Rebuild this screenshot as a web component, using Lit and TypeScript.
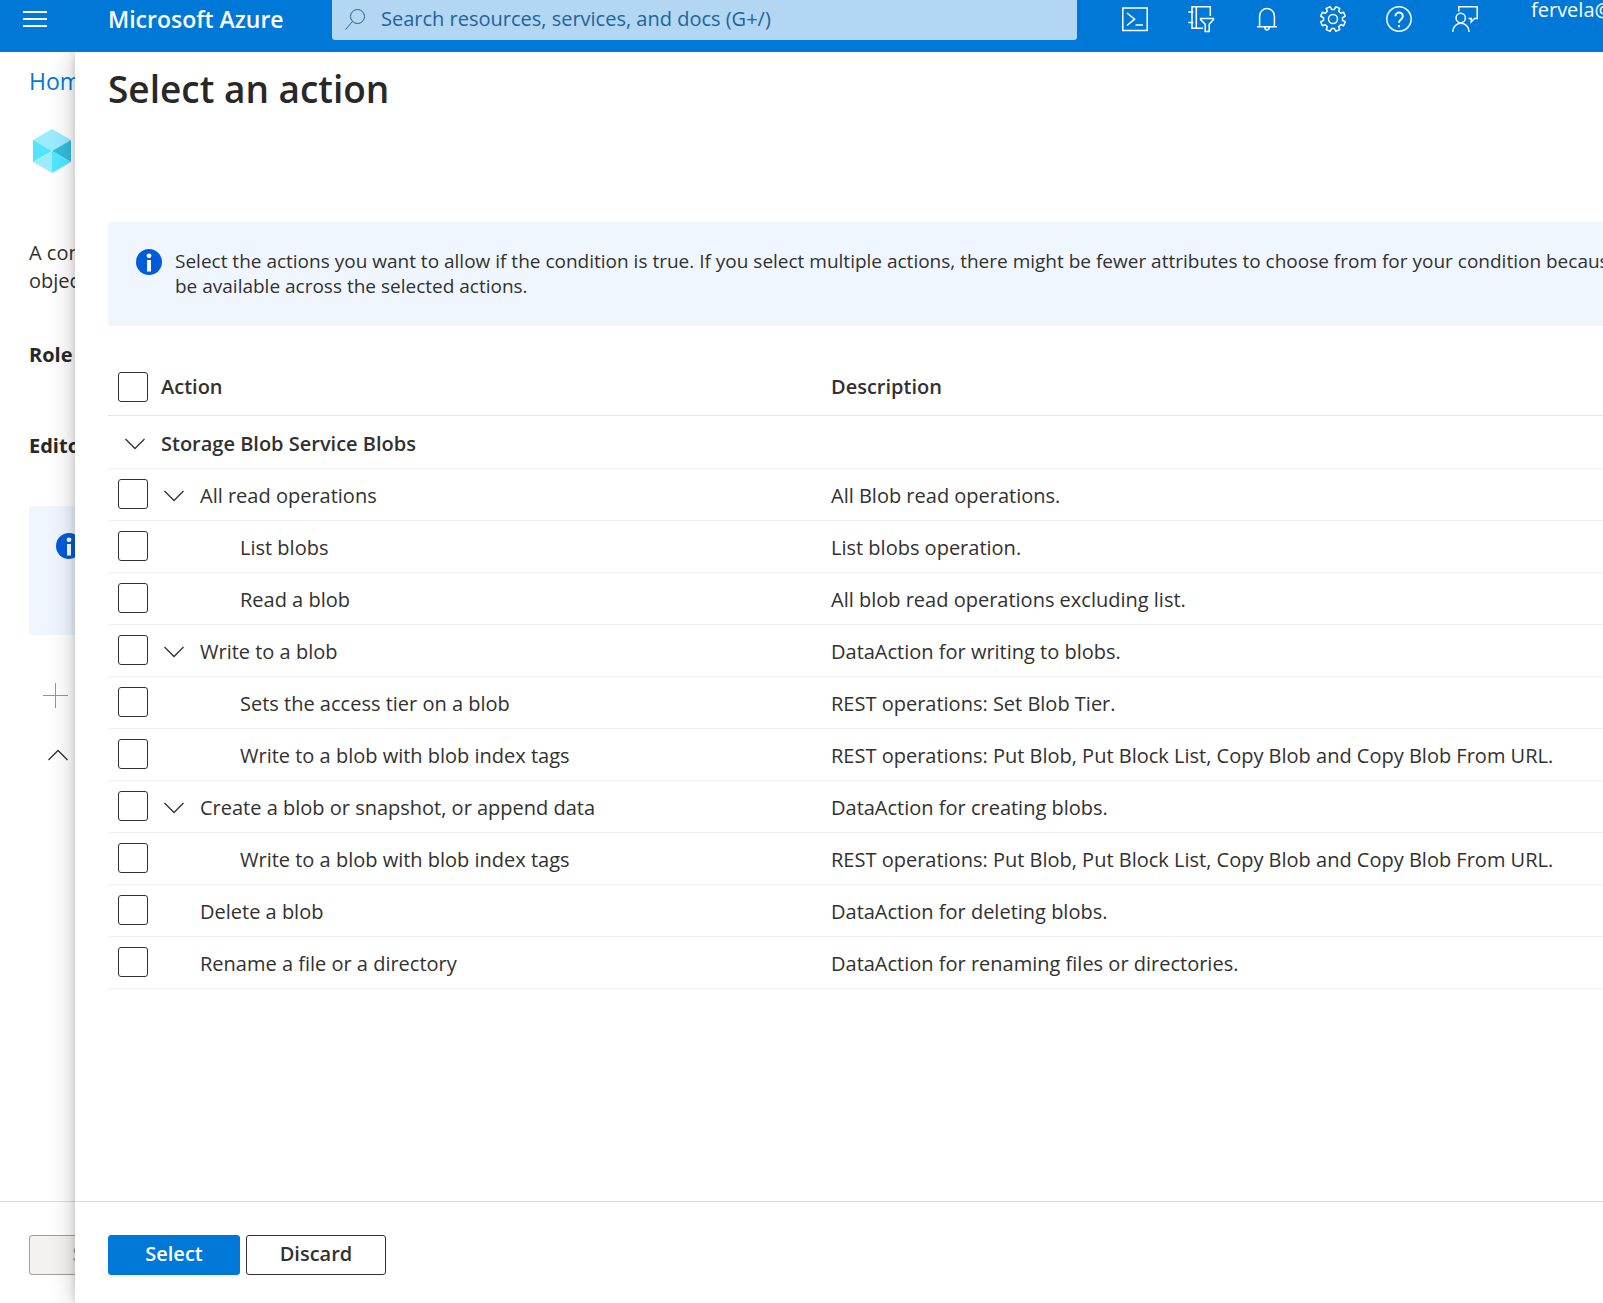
import { LitElement, html, css, svg, nothing } from "lit";
import { customElement } from "lit/decorators.js";

interface ActionRow {
  level: number;
  name: string;
  description: string;
  group?: boolean;
}

const ROWS: ActionRow[] = [
  { level: 1, name: "All read operations", description: "All Blob read operations.", group: true },
  { level: 2, name: "List blobs", description: "List blobs operation." },
  { level: 2, name: "Read a blob", description: "All blob read operations excluding list." },
  { level: 1, name: "Write to a blob", description: "DataAction for writing to blobs.", group: true },
  { level: 2, name: "Sets the access tier on a blob", description: "REST operations: Set Blob Tier." },
  { level: 2, name: "Write to a blob with blob index tags", description: "REST operations: Put Blob, Put Block List, Copy Blob and Copy Blob From URL." },
  { level: 1, name: "Create a blob or snapshot, or append data", description: "DataAction for creating blobs.", group: true },
  { level: 2, name: "Write to a blob with blob index tags", description: "REST operations: Put Blob, Put Block List, Copy Blob and Copy Blob From URL." },
  { level: 1, name: "Delete a blob", description: "DataAction for deleting blobs." },
  { level: 1, name: "Rename a file or a directory", description: "DataAction for renaming files or directories." },
];

// Outline of an eight-toothed gear centred in a 26-unit box.
const gearPath = () => {
  const pts: string[] = [];
  for (let i = 0; i < 8; i++) {
    const base = (i * 45 + 22.5) * (Math.PI / 180);
    for (const [da, r] of [[-14, 9.6], [-10, 12.6], [10, 12.6], [14, 9.6]]) {
      const a = base + (da * Math.PI) / 180;
      pts.push(`${(13 + r * Math.cos(a)).toFixed(2)} ${(13 + r * Math.sin(a)).toFixed(2)}`);
    }
  }
  return `M${pts.join("L")}Z`;
};

const TOOLS = [
  { label: "Cloud Shell", art: svg`<path d="M.8 2h24.4v22.6H.8z"/><path d="M5 7l7.600 6.200L5 19.500M13.500 19h7.500"/>` },
  { label: "Directories and subscriptions", art: svg`<path d="M22.300 10V.8H4v21.500h11M8.300.8v21.500M.3 6h5M.3 16.500h5M12.600 12.600h12.800v1l-4.200 4.600v7.200h-4v-7.200l-4.600-4.600z"/>` },
  { label: "Notifications", art: svg`<path d="M3 20.700h20M5.600 20.500V10a7.400 7.400 0 0 1 14.800 0v10.500M10.800 21a2.300 2.900 0 0 0 4.600 0"/>` },
  { label: "Settings", art: svg`<path stroke-linejoin="round" d=${gearPath()}/><circle cx="13" cy="13" r="4.500"/>` },
  { label: "Help", art: svg`<circle cx="13" cy="13" r="12.200"/><path stroke-width="2" d="M9.400 10.200a3.700 3.700 0 1 1 5.800 3c-1.500 1-2.200 1.700-2.200 3.600M13 19v2.200"/>` },
  { label: "Feedback", art: svg`<circle cx="8.700" cy="12" r="4.700"/><path d="M.7 26a8.200 8.800 0 0 1 16.400 0M6.800 5.500V.8h18.400v11.800h-2.700l-3.300 3.400v-3.400h-2.700"/>` },
];

const chevronDown = svg`<svg class="chevron" viewBox="0 0 20 12"><path d="M.5 1l9.500 9.500L19.500 1"/></svg>`;
const chevronUp = svg`<svg class="chevron" viewBox="0 0 20 12"><path d="M.5 11L10 1.500l9.500 9.500"/></svg>`;
const infoIcon = svg`<svg class="info-icon" viewBox="0 0 26 26"><circle cx="13" cy="13" r="13" fill="#015cda"/><circle cx="13" cy="6.800" r="2.400" fill="#fff"/><path d="M11 11h4v11.500h-4z" fill="#fff"/></svg>`;

@customElement("app-root")
export class AppRoot extends LitElement {
  static styles = css`
    :host {
      display: flex;
      flex-direction: column;
      min-height: 100vh;
      overflow: hidden;
      font-family: "Segoe UI", "Open Sans", "Noto Sans", sans-serif;
      font-size: 20px;
      line-height: 28px;
      color: #323130;
      background: #fff;
    }
    *, *::before { box-sizing: border-box; }
    button, input { font: inherit; color: inherit; margin: 0; padding: 0; }
    svg { display: block; fill: none; }
    h1, h2, p { margin: 0; }

    .topbar {
      position: relative;
      z-index: 2;
      display: flex;
      height: 52px;
      padding: 0 0 14px 22px;
      background: #0078d7;
      color: #fff;
      align-items: center;
      white-space: nowrap;
      overflow: hidden;
    }
    .bare { display: grid; place-items: center; border: 0; background: none; }
    .menu svg { width: 26px; height: 18px; stroke: #fff; stroke-width: 2; }
    .brand { width: 224px; margin-left: 60px; font-size: 23px; font-weight: 600; color: #fff; text-decoration: none; }
    .search {
      display: flex;
      flex: 1;
      align-self: flex-start;
      height: 40px;
      align-items: center;
      gap: 16px;
      padding: 0 0 2px 13px;
      border-radius: 0 0 3px 3px;
      background: #b3d6f2;
      color: #1f639e;
    }
    .search svg { width: 20px; height: 22px; stroke: #1f639e; stroke-width: 1; }
    .search input { flex: 1; min-width: 0; border: 0; background: none; outline: 0; }
    .search input::placeholder { color: #1f639e; opacity: 1; }
    .tools { display: flex; gap: 40px; margin: 0 53px 0 45px; }
    .tools svg { width: 26px; height: 26px; stroke: #fff; stroke-width: 1.5; overflow: visible; }
    .account { width: 72px; align-self: flex-start; line-height: 20px; }

    .workspace { flex: 1; display: grid; grid-template-columns: 75px minmax(0, 1fr); }

    .page { display: flex; flex-direction: column; min-width: 0; overflow: hidden; white-space: nowrap; }
    .page-body { flex: 1; display: flex; flex-direction: column; align-items: flex-start; padding: 15px 0 0 29px; }
    .crumb { font-size: 23px; color: #0078d7; text-decoration: none; }
    .cube { width: 38px; height: 44px; margin: 34px 0 66px 4px; flex: none; }
    .role, .editor { font-size: 20px; font-weight: 700; line-height: 28px; color: #292827; }
    .role { margin-top: 46px; }
    .editor { margin-top: 63px; }
    .page-info { width: 100%; height: 129px; margin-top: 46px; padding: 27px; border-radius: 3px 0 0 3px; background: #eff6ff; }
    .add { margin: 48px 0 41px 14px; }
    .add svg { width: 25px; height: 25px; stroke: #979593; stroke-width: 1; }
    .collapse { margin-left: 19px; }

    .footer { display: flex; flex: none; height: 102px; gap: 6px; padding: 33px 0 0 33px; border-top: 1px solid #dcdcdc; }
    .page .footer { padding-left: 29px; }
    .btn { height: 40px; border: 1px solid #323130; border-radius: 3px; background: #fff; font-weight: 600; line-height: 36px; padding-bottom: 2px; }
    .primary { width: 132px; border-color: #0078d7; background: #0078d7; color: #fff; }
    .discard { width: 140px; }
    .btn.save { width: 132px; flex: none; border-color: #a19f9d; background: #f3f2f1; color: #a19f9d; }

    .panel {
      position: relative;
      z-index: 1;
      display: flex;
      flex-direction: column;
      background: #fff;
      box-shadow: 0 0 25px rgba(0, 0, 0, 0.22), 0 0 8px rgba(0, 0, 0, 0.14);
    }
    .panel-body { flex: 1; padding: 13px 0 48px 33px; }
    h1 { font-size: 37px; font-weight: 600; line-height: 48px; color: #292827; }
    .notice {
      display: flex;
      gap: 13px;
      margin: 109px 0 33px;
      padding: 27px 0 27px 28px;
      border-radius: 3px 0 0 3px;
      background: #eff6ff;
      font-size: 19px;
      line-height: 25px;
      white-space: nowrap;
      overflow: hidden;
    }
    .info-icon { width: 26px; height: 26px; flex: none; }

    table { width: 100%; border-collapse: collapse; table-layout: fixed; white-space: nowrap; }
    .col-action { width: 723px; }
    th, td { height: 52px; padding: 0; border-bottom: 1px solid #f0efee; text-align: left; font-weight: 400; vertical-align: middle; }
    thead th { height: 56px; border-bottom-color: #e4e4e4; font-weight: 600; }
    .group th { height: 53px; font-weight: 600; }
    .cell { display: flex; align-items: center; height: 30px; padding-left: 10px; }
    .box { appearance: none; width: 30px; height: 30px; flex: none; border: 1px solid #323130; border-radius: 3px; background: #fff; }
    .box:checked { background: #0078d7; }
    .label { padding-left: 13px; }
    tbody .label, tbody .toggle, .description { padding-top: 4px; }
    .chevron { width: 20px; height: 12px; stroke: #323130; stroke-width: 1.3; }
    .toggle { width: 30px; padding-left: 7px; place-items: center start; }
    .level-1 { margin-left: 52px; padding-left: 0; }
    .level-2 { margin-left: 92px; padding-left: 0; }
    .box + .toggle { margin-left: 16px; padding-left: 0; width: 20px; }
    .toggle + .level-1 { margin-left: 16px; }
  `;

  render() {
    return html`
      <header class="topbar">
        <button class="bare menu" aria-label="Show portal menu">
          <svg viewBox="0 0 26 18"><path d="M1 2h24M1 9h24M1 16h24" /></svg>
        </button>
        <a class="brand" href="#">Microsoft Azure</a>
        <label class="search">
          <svg viewBox="0 0 20 22"><circle cx="12.500" cy="8.500" r="7" /><path d="M7.500 13.500L.5 21.500" /></svg>
          <input type="search" aria-label="Search" placeholder="Search resources, services, and docs (G+/)" />
        </label>
        <nav class="tools">
          ${TOOLS.map((t) => html`<button class="bare" aria-label=${t.label}><svg viewBox="0 0 26 26">${t.art}</svg></button>`)}
        </nav>
        <span class="account">fervela@</span>
      </header>
      <div class="workspace">
        <section class="page">
          <div class="page-body">
            <a class="crumb" href="#">Home</a>
            <svg class="cube" viewBox="0 0 38 44">
              <path fill="#9cebff" d="M19 0l19 11-19 11L0 11z" />
              <path fill="#50e6ff" d="M0 11l19 11L0 33z" />
              <path fill="#32bedd" d="M38 11v22L19 22z" />
              <path fill="#9cebff" d="M0 33l19-11v22z" />
              <path fill="#50e6ff" d="M38 33L19 22v22z" />
            </svg>
            <p>A con<br />object</p>
            <h2 class="role">Role</h2>
            <h2 class="editor">Editor</h2>
            <div class="page-info">${infoIcon}</div>
            <button class="bare add" aria-label="Add"><svg viewBox="0 0 25 25"><path d="M12.500 0v25M0 12.500h25" /></svg></button>
            <button class="bare collapse" aria-label="Collapse">${chevronUp}</button>
          </div>
          <footer class="footer"><button class="btn save" disabled>Save</button></footer>
        </section>
        <main class="panel">
          <div class="panel-body">
            <h1>Select an action</h1>
            <div class="notice">
              ${infoIcon}
              <p>
                Select the actions you want to allow if the condition is true. If you select multiple actions, there might be fewer attributes to choose from for your condition because<br />be available across the selected actions.
              </p>
            </div>
            <table>
              <colgroup><col class="col-action" /><col /></colgroup>
              <thead>
                <tr>
                  <th scope="col"><div class="cell"><input class="box" id="all" type="checkbox" /><label class="label" for="all">Action</label></div></th>
                  <th scope="col">Description</th>
                </tr>
              </thead>
              <tbody>
                <tr class="group">
                  <th scope="rowgroup"><div class="cell"><button class="bare toggle" aria-label="Collapse Storage Blob Service Blobs">${chevronDown}</button><span class="label">Storage Blob Service Blobs</span></div></th>
                  <td></td>
                </tr>
                ${ROWS.map((r, i) => html`
                  <tr>
                    <td>
                      <div class="cell">
                        <input class="box" id="row-${i}" type="checkbox" />
                        ${r.group ? html`<button class="bare toggle" aria-label="Collapse ${r.name}">${chevronDown}</button>` : nothing}
                        <label class="label level-${r.level}" for="row-${i}">${r.name}</label>
                      </div>
                    </td>
                    <td class="description">${r.description}</td>
                  </tr>`)}
              </tbody>
            </table>
          </div>
          <footer class="footer">
            <button class="btn primary">Select</button>
            <button class="btn discard">Discard</button>
          </footer>
        </main>
      </div>
    `;
  }
}
